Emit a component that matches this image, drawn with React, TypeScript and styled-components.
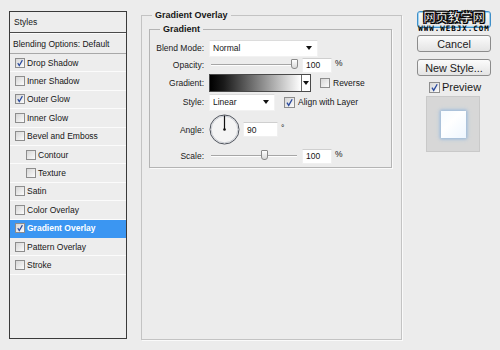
import React from 'react';
import styled, { createGlobalStyle } from 'styled-components';

const GlobalStyle = createGlobalStyle`
  html, body {
    margin: 0;
    padding: 0;
    background: #ececec;
  }
  body {
    font-family: "Liberation Sans", Arial, sans-serif;
    font-size: 8.5px;
    color: #161616;
  }
`;

interface StyleItem {
  label: string;
  checked?: boolean;
  sub?: boolean;
  active?: boolean;
}

const STYLE_ITEMS: StyleItem[] = [
  { label: 'Drop Shadow', checked: true },
  { label: 'Inner Shadow' },
  { label: 'Outer Glow', checked: true },
  { label: 'Inner Glow' },
  { label: 'Bevel and Emboss' },
  { label: 'Contour', sub: true },
  { label: 'Texture', sub: true },
  { label: 'Satin' },
  { label: 'Color Overlay' },
  { label: 'Gradient Overlay', checked: true, active: true },
  { label: 'Pattern Overlay' },
  { label: 'Stroke' },
];

function CheckBox({ checked, size = 10 }: { checked?: boolean; size?: number }) {
  return (
    <Box $size={size}>
      {checked && (
        <svg width={size - 2} height={size - 2} viewBox="0 0 10 10">
          <path d="M2.2 5.2 L4.1 8.2 L8 1.4" stroke="#2b4b9e" strokeWidth="1.5" fill="none" />
        </svg>
      )}
    </Box>
  );
}

// value is 0..100, the thumb slides over the track width
function Slider({ value }: { value: number }) {
  return (
    <Track>
      <Thumb style={{ left: `${(value / 100) * 80}px` }} />
    </Track>
  );
}

export default function App() {
  return (
    <>
      <GlobalStyle />
      <Dialog>
        <StylesPanel>
          <PanelHeader>Styles</PanelHeader>
          <BlendRow>Blending Options: Default</BlendRow>
          {STYLE_ITEMS.map((item) => (
            <StyleRow key={item.label} $active={item.active} $sub={item.sub}>
              <CheckBox checked={item.checked} />
              <span>{item.label}</span>
            </StyleRow>
          ))}
        </StylesPanel>

        <OuterGroup>
          <OuterLegend>Gradient Overlay</OuterLegend>
          <InnerGroup>
            <InnerLegend>Gradient</InnerLegend>
            <Grid>
              <Label>Blend Mode:</Label>
              <Select $width={109}>
                <span>Normal</span>
                <Arrow />
              </Select>

              <Label>Opacity:</Label>
              <Inline>
                <Slider value={100} />
                <NumBox>100</NumBox>
                <Unit>%</Unit>
              </Inline>

              <Label>Gradient:</Label>
              <Inline>
                <GradientPicker>
                  <GradientBar />
                  <GradientArrow>
                    <Arrow />
                  </GradientArrow>
                </GradientPicker>
                <CheckLabel $gap={9}>
                  <CheckBox />
                  <span>Reverse</span>
                </CheckLabel>
              </Inline>

              <Label>Style:</Label>
              <Inline>
                <Select $width={66}>
                  <span>Linear</span>
                  <Arrow />
                </Select>
                <CheckLabel $gap={9}>
                  <CheckBox checked size={11} />
                  <span>Align with Layer</span>
                </CheckLabel>
              </Inline>

              <Label>Angle:</Label>
              <Inline>
                <svg width="31" height="31" viewBox="0 0 31 31">
                  <circle cx="15.5" cy="15.5" r="14.5" fill="#f4f4f4" stroke="#4a4f58" strokeWidth="1" />
                  <circle cx="15.5" cy="15.5" r="13.3" fill="none" stroke="#c9ccd2" strokeWidth="1" />
                  <line x1="15.5" y1="15.5" x2="15.5" y2="1.5" stroke="#111" strokeWidth="1.2" />
                  <circle cx="15.5" cy="15.5" r="1.3" fill="#111" />
                </svg>
                <NumBox $width={35} $ml={3}>90</NumBox>
                <Unit>°</Unit>
              </Inline>

              <Label>Scale:</Label>
              <Inline>
                <Slider value={62} />
                <NumBox>100</NumBox>
                <Unit>%</Unit>
              </Inline>
            </Grid>
          </InnerGroup>
        </OuterGroup>

        <Side>
          <OkWrap>
            <Button $default>OK</Button>
            <Watermark>
              <WmTitle>网页教学网</WmTitle>
              <WmUrl>WWW.WEBJX.COM</WmUrl>
            </Watermark>
          </OkWrap>
          <Button>Cancel</Button>
          <Button>New Style...</Button>
          <PreviewToggle>
            <CheckBox checked size={11} />
            <span>Preview</span>
          </PreviewToggle>
          <Swatch>
            <SwatchSquare />
          </Swatch>
        </Side>
      </Dialog>
    </>
  );
}

const Dialog = styled.div`
  display: flex;
  align-items: flex-start;
  box-sizing: border-box;
  width: 500px;
  height: 350px;
  padding: 9px 9px 0;
`;

const StylesPanel = styled.div`
  box-sizing: border-box;
  width: 118px;
  height: 328px;
  margin-top: 2px;
  border: 1px solid #3a3a3a;
  background: #ededed;
  display: flex;
  flex-direction: column;
`;

const PanelHeader = styled.div`
  height: 20px;
  padding-left: 4px;
  display: flex;
  align-items: center;
  border-bottom: 1px solid #4a4a4a;
  box-shadow: 0 1px 0 #fafafa;
`;

const BlendRow = styled.div`
  height: 19px;
  margin-top: 1px;
  padding-left: 3px;
  display: flex;
  align-items: center;
  border-bottom: 1px solid #a8a8a8;
`;

const StyleRow = styled.div<{ $active?: boolean; $sub?: boolean }>`
  box-sizing: border-box;
  height: 18.4px;
  display: flex;
  align-items: center;
  gap: 2px;
  padding-left: ${({ $sub }) => ($sub ? '16px' : '5px')};
  border-bottom: 1px solid ${({ $active }) => ($active ? '#3b96f2' : '#fbfbfb')};
  background: ${({ $active }) => ($active ? '#3b96f2' : 'transparent')};
  color: ${({ $active }) => ($active ? '#fff' : '#161616')};
  font-weight: ${({ $active }) => ($active ? 700 : 400)};
`;

const Box = styled.span<{ $size: number }>`
  box-sizing: border-box;
  width: ${({ $size }) => $size}px;
  height: ${({ $size }) => $size}px;
  flex: none;
  display: inline-flex;
  align-items: center;
  justify-content: center;
  border: 1px solid #8d8d8d;
  background: linear-gradient(135deg, #d6d6d6, #fbfbfb);
`;

const OuterGroup = styled.fieldset`
  box-sizing: border-box;
  width: 261px;
  height: 331px;
  margin: 0 0 0 14px;
  padding: 0 9px 0 7px;
  border: 1px solid #c3c3c3;
  box-shadow: 1px 1px 0 #fafafa;
`;

const OuterLegend = styled.legend`
  margin-left: 3px;
  padding: 0 3px;
  font-size: 9px;
  font-weight: 700;
  line-height: 12px;
`;

const InnerGroup = styled.fieldset`
  margin: 2px 0 0;
  padding: 4px 0 2px;
  border: 1px solid #b4b4b4;
  box-shadow: 1px 1px 0 #fafafa;
`;

const InnerLegend = styled.legend`
  margin-left: 10px;
  padding: 0 3px;
  font-size: 9px;
  font-weight: 700;
  line-height: 12px;
`;

const Grid = styled.div`
  display: grid;
  grid-template-columns: 54px 1fr;
  grid-template-rows: 18px 16px 19px 20px 35px 18px;
  column-gap: 5px;
  align-items: center;
`;

const Label = styled.span`
  justify-self: end;
  color: #202020;
`;

const Inline = styled.div`
  display: flex;
  align-items: center;
`;

const Select = styled.div<{ $width: number }>`
  box-sizing: border-box;
  width: ${({ $width }) => $width}px;
  height: 17px;
  display: flex;
  align-items: center;
  justify-content: space-between;
  padding: 0 5px 0 3px;
  background: #fff;
  border: 1px solid #f2f2f2;
  border-top-color: #dcdcdc;
`;

const Arrow = styled.span`
  width: 0;
  height: 0;
  border-left: 3.5px solid transparent;
  border-right: 3.5px solid transparent;
  border-top: 4px solid #111;
`;

const Track = styled.div`
  position: relative;
  width: 86px;
  height: 1px;
  margin-left: 2px;
  background: #a6a6a6;
  border-bottom: 1px solid #fdfdfd;
`;

const Thumb = styled.span`
  position: absolute;
  top: -5px;
  box-sizing: border-box;
  width: 7px;
  height: 10px;
  border: 1px solid #8a8a8a;
  border-radius: 1px 1px 3px 3px;
  background: linear-gradient(#ffffff, #d8d8d8);
`;

const NumBox = styled.div<{ $width?: number; $ml?: number }>`
  box-sizing: border-box;
  width: ${({ $width }) => $width ?? 30}px;
  height: 15px;
  margin-left: ${({ $ml }) => $ml ?? 5}px;
  padding-left: 3px;
  display: flex;
  align-items: center;
  background: #fff;
  border: 1px solid #f0f0f0;
  border-top-color: #cfcfcf;
  font-size: 8.5px;
`;

const Unit = styled.span`
  margin-left: 3px;
  margin-bottom: 4px;
`;

const GradientPicker = styled.div`
  box-sizing: border-box;
  width: 102px;
  height: 18px;
  display: flex;
  border: 1px solid #4a4a4a;
`;

const GradientBar = styled.div`
  flex: 1;
  background: linear-gradient(90deg, #000 0%, #1a1a1a 15%, #ffffff 100%);
`;

const GradientArrow = styled.div`
  width: 8px;
  display: flex;
  align-items: center;
  justify-content: center;
  background: #fff;
  border-left: 1px solid #6a6a6a;
`;

const CheckLabel = styled.label<{ $gap: number }>`
  display: flex;
  align-items: center;
  gap: 3px;
  margin-left: ${({ $gap }) => $gap}px;
`;

const Side = styled.div`
  width: 74px;
  margin: 2px 0 0 15px;
  display: flex;
  flex-direction: column;
  gap: 7px;
`;

const OkWrap = styled.div`
  position: relative;
`;

const Button = styled.div<{ $default?: boolean }>`
  box-sizing: border-box;
  height: 17px;
  display: flex;
  align-items: center;
  justify-content: center;
  font-size: 10.8px;
  color: #1a1a1a;
  border: 1px solid ${({ $default }) => ($default ? '#3f8fc9' : '#8c8c8c')};
  border-radius: 3px;
  background: linear-gradient(#fbfbfb, #e4e4e4);
  box-shadow: ${({ $default }) => ($default ? 'inset 0 0 0 1px #9fd4f3' : 'none')};
`;

/* site watermark stamped over the OK button */
const Watermark = styled.div`
  position: absolute;
  top: -1px;
  left: 0;
  right: 0;
  display: flex;
  flex-direction: column;
  align-items: center;
  pointer-events: none;
`;

const WmTitle = styled.span`
  font-family: "Noto Sans CJK SC", sans-serif;
  font-size: 12.5px;
  font-weight: 700;
  line-height: 14px;
  letter-spacing: -0.2px;
  color: #fff;
  -webkit-text-stroke: 0.5px #000;
  text-shadow: 1px 1px 0 #000, -1px -1px 0 #000, 1px -1px 0 #000, -1px 1px 0 #000;
`;

const WmUrl = styled.span`
  margin-top: 1px;
  font-family: "DejaVu Sans Mono", monospace;
  font-size: 7.5px;
  font-weight: 700;
  line-height: 7px;
  letter-spacing: 1px;
  color: #000;
`;

const PreviewToggle = styled.label`
  display: flex;
  align-items: center;
  gap: 2px;
  margin: -2px 0 0 12px;
  font-size: 11px;
  color: #1a1a1a;
`;

const Swatch = styled.div`
  box-sizing: border-box;
  width: 54px;
  height: 56px;
  margin: -4px 0 0 9px;
  display: flex;
  align-items: center;
  justify-content: center;
  background: #d7d7d7;
  border: 1px solid #c9c9c9;
`;

const SwatchSquare = styled.div`
  width: 25px;
  height: 27px;
  background: linear-gradient(135deg, #f6fbff, #ffffff 40%, #eef6ff);
  box-shadow: 0 0 3px 1px #9ab8d8, 0 0 6px #b9cee3;
`;
